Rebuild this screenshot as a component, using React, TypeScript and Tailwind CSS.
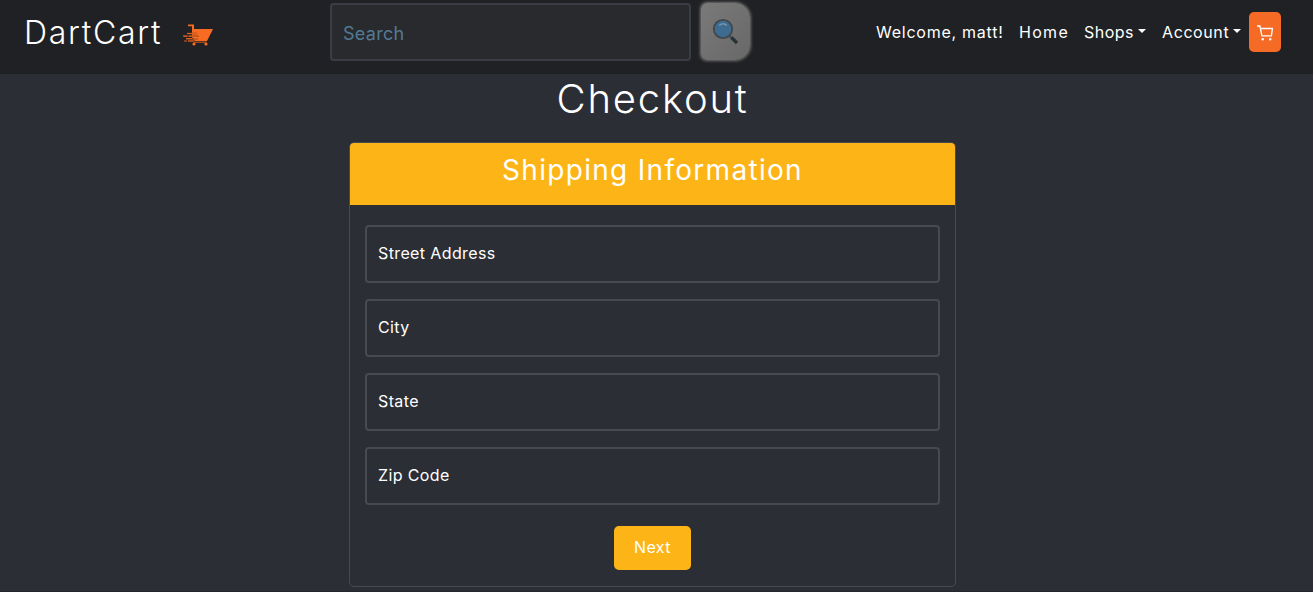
import React from "react";

const fields = ["Street Address", "City", "State", "Zip Code"];

function Logo() {
  return (
    <svg width="32" height="22" viewBox="0 0 32 22" className="ml-[20px] mt-[3px]" aria-hidden="true">
      <path d="M6 0.500h6v4.500h19l-6 12H11l-1-4V2.200H6z" fill="#f76b22" />
      <path d="M11 17.5h14l-1 1.5H12z" fill="#9c491e" />
      <circle cx="12" cy="20" r="1.6" fill="#f76b22" />
      <circle cx="24" cy="20" r="1.6" fill="#f76b22" />
      <path d="M5 9.5h10M2 12.2h15M4 14.8h12M6 17h7" stroke="#8c421e" strokeWidth="1.6" />
      <path d="M5 9.500h11M1 12.200h4M7 12.200h10M4 14.600h6M12 14.600h4M2 17h3M6 17h5" stroke="#d9601f" strokeWidth="1.200" />
    </svg>
  );
}

function Magnifier() {
  return (
    <svg width="28" height="28" viewBox="0 0 28 28" aria-hidden="true">
      <path d="M17.5 18l3 3" stroke="#454648" strokeWidth="2" />
      <path d="M19.5 19.5l5.5 5.5" stroke="#263238" strokeWidth="3.2" />
      <circle cx="11" cy="11" r="9.2" fill="#3e6c91" stroke="#43474b" strokeWidth="1.8" />
      <path d="M7 7.5q4-3.500 8 0" stroke="#7294ac" strokeWidth="1.4" fill="none" />
    </svg>
  );
}

function CartIcon() {
  return (
    <svg width="16" height="16" viewBox="0 0 16 16" fill="none" stroke="#fff" strokeWidth="1.3" className="mt-px" aria-hidden="true">
      <path d="M0 1h2.900L4.900 10.800H14.400L15.400 3.500H3.500" />
      <circle cx="5.700" cy="14.200" r="1.200" fill="#fff" stroke="none" />
      <circle cx="13.200" cy="14.200" r="1.200" fill="#fff" stroke="none" />
    </svg>
  );
}

function Caret() {
  return <span className="mb-[3px] h-0 w-0 shrink-0 border-x-[4px] border-t-[4px] border-x-transparent border-t-white" />;
}

export default function App() {
  return (
    <div className="flex h-[592px] flex-col overflow-hidden border-b border-[#25262b] bg-[#2c2e36] font-['Inter',sans-serif] text-[16px] text-white">
      <header className="flex h-[74px] shrink-0 items-start bg-[#202124]">
        <a className="flex w-[330px] items-center pt-[9px] pl-[24px]">
          <span className="w-[138px] text-[32px] leading-[48px] font-[350] tracking-[1.700px] whitespace-nowrap">DartCart</span>
          <Logo />
        </a>
        <form className="flex items-start gap-[10px]">
          <input
            placeholder="Search"
            className="mt-[3px] h-[58px] w-[361px] rounded-[4px] border-2 border-[#3a3d45] bg-[#292a2e] px-[11px] pt-[3px] text-[18px] tracking-[0.300px] outline-none placeholder:text-[#527a94]"
          />
          <button type="button" className="mt-[3px] flex h-[57px] w-[49px] items-center justify-center rounded-[6px_15px_15px_6px] bg-linear-to-br from-[#7a7a7a] to-[#686868] pl-px shadow-[0_0_3px_1px_#747474]">
            <Magnifier />
          </button>
        </form>
        <nav className="mr-[32px] ml-auto flex items-start gap-4 leading-6 whitespace-nowrap">
          <span className="mt-[20px] w-[127px] tracking-[0.750px]">Welcome, matt!</span>
          <a className="mt-[20px] w-[50px] tracking-[1.300px]">Home</a>
          <a className="mt-[20px] -ml-px flex w-[62px] items-center justify-between tracking-[0.500px]">Shops<Caret /></a>
          <div className="flex items-start gap-2">
            <a className="mt-[20px] flex w-[79px] items-center justify-between tracking-[0.600px]">Account<Caret /></a>
            <button className="mt-[12px] flex h-10 w-8 items-center justify-center rounded-[5px] bg-[#f56a24]">
              <CartIcon />
            </button>
          </div>
        </nav>
      </header>
      <main className="flex flex-col items-center pr-[8px]">
        <h1 className="mb-[20px] h-[48px] text-[40px] leading-[50px] font-[350] tracking-[1.800px]">Checkout</h1>
        <section className="h-[445px] w-[607px] overflow-hidden rounded-[5px] border border-[#484a52]">
          <h2 className="h-[62px] bg-[#fdb416] pt-[10px] text-center text-[28px] leading-[35px] tracking-[1.300px]">Shipping Information</h2>
          <form className="flex flex-col items-center gap-4 px-[15px] pt-[20px]">
            {fields.map((field) => (
              <label key={field} className="flex h-[58px] w-full items-center rounded-[4px] border-2 border-[#484a52] px-[11px] pb-[2px] tracking-[0.380px]">
                {field}
              </label>
            ))}
            <button type="button" className="mt-[5px] h-[44px] w-[77px] rounded-[5px] bg-[#fdb416] pb-[2px] tracking-[0.400px]">Next</button>
          </form>
        </section>
      </main>
    </div>
  );
}
